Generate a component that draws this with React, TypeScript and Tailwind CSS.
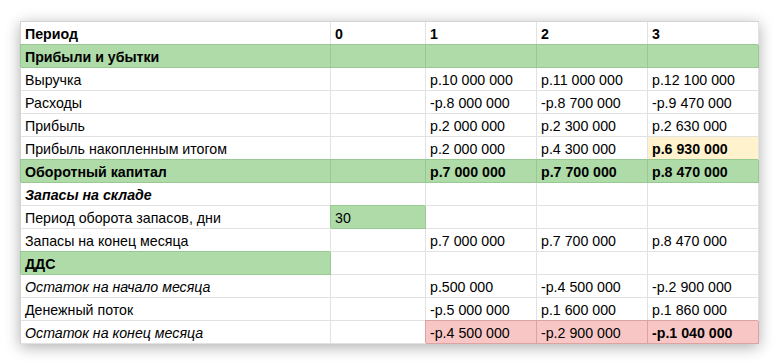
type Tone = 'g' | 'y' | 'r' | undefined

type Cell = {
  text?: string
  tone?: Tone
  bold?: boolean
  italic?: boolean
}

type Row = Cell[]

const c = (text?: string, tone?: Tone, bold?: boolean, italic?: boolean): Cell => ({ text, tone, bold, italic })

const rows: Row[] = [
  [c('Период', undefined, true), c('0', undefined, true), c('1', undefined, true), c('2', undefined, true), c('3', undefined, true)],
  [c('Прибыли и убытки', 'g', true), c('', 'g'), c('', 'g'), c('', 'g'), c('', 'g')],
  [c('Выручка'), c(), c('р.10 000 000'), c('р.11 000 000'), c('р.12 100 000')],
  [c('Расходы'), c(), c('-р.8 000 000'), c('-р.8 700 000'), c('-р.9 470 000')],
  [c('Прибыль'), c(), c('р.2 000 000'), c('р.2 300 000'), c('р.2 630 000')],
  [c('Прибыль накопленным итогом'), c(), c('р.2 000 000'), c('р.4 300 000'), c('р.6 930 000', 'y', true)],
  [c('Оборотный капитал', 'g', true), c('', 'g'), c('р.7 000 000', 'g', true), c('р.7 700 000', 'g', true), c('р.8 470 000', 'g', true)],
  [c('Запасы на складе', undefined, true, true), c(), c(), c(), c()],
  [c('Период оборота запасов, дни'), c('30', 'g'), c(), c(), c()],
  [c('Запасы на конец месяца'), c(), c('р.7 000 000'), c('р.7 700 000'), c('р.8 470 000')],
  [c('ДДС', 'g', true), c(), c(), c(), c()],
  [c('Остаток на начало месяца', undefined, false, true), c(), c('р.500 000'), c('-р.4 500 000'), c('-р.2 900 000')],
  [c('Денежный поток'), c(), c('-р.5 000 000'), c('р.1 600 000'), c('р.1 860 000')],
  [c('Остаток на конец месяца', undefined, false, true), c(), c('-р.4 500 000', 'r'), c('-р.2 900 000', 'r'), c('-р.1 040 000', 'r', true)],
]

function toneClass(tone: Tone) {
  if (tone === 'g') return 'bg-[#aedba8] border-[#98c992] shadow-[-1px_-1px_0_#98c992]'
  if (tone === 'y') return 'bg-[#fff2cc] border-[#e2e2e2]'
  if (tone === 'r') return 'bg-[#f8c7c5] border-[#dba4a1] shadow-[-1px_-1px_0_#dba4a1]'
  return 'bg-white border-[#e2e2e2]'
}

function SheetCell({ cell }: { cell: Cell }) {
  return (
    <div
      className={`flex h-[23px] items-center overflow-hidden whitespace-nowrap border-r border-b pl-[4px] pt-[2px] text-[14.2px] leading-none text-black ${toneClass(cell.tone)} ${cell.bold ? 'font-bold' : ''} ${cell.italic ? 'italic' : ''}`}
    >
      {cell.text}
    </div>
  )
}

export default function App() {
  return (
    <div className="min-h-[363px] w-[779px] bg-white pl-[20px] pt-[21px] font-['Liberation_Sans',Arial,sans-serif]">
      <div className="grid w-[739px] grid-cols-[310px_95px_111px_111px_111px] border-t border-l border-[#d4d4d4] shadow-[0_3px_14px_rgba(0,0,0,0.32)]">
        {rows.map((row, r) => row.map((cell, i) => <SheetCell key={`${r}-${i}`} cell={cell} />))}
      </div>
    </div>
  )
}
